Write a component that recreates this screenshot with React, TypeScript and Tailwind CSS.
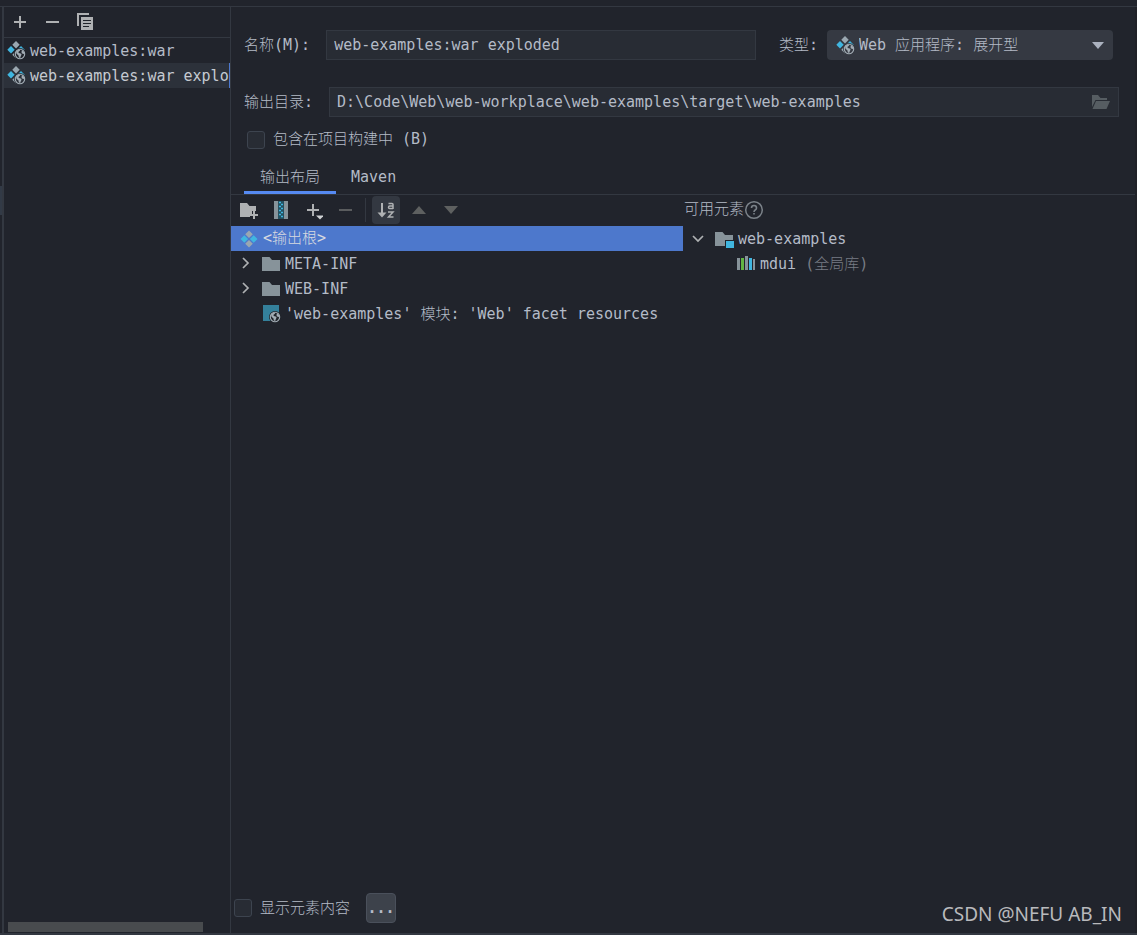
import type { ReactNode } from "react";

/* Icons */

function Globe({ ring = "#21252b" }: { ring?: string }) {
  return (
    <g>
      <circle cx="13" cy="13" r="6" fill={ring} />
      <circle cx="13" cy="13" r="4.7" fill={ring} stroke="#a3adb5" strokeWidth="1.1" />
      <path d="M9 10.5l2-1.8h2.2l-.5 1.4-1.2.7.2 1.2 2 .4.9 1.2-.8 1.6-.6 1.8-1.4-.6-.3-2-2-1.6z" fill="#a3adb5" />
      <path d="M15 9l2 2 .4 2.4-1.2-.6-1.4-.4-.3-1.4z" fill="#a3adb5" />
    </g>
  );
}

function ArtifactIcon({ ring }: { ring?: string }) {
  return (
    <svg width="19" height="19" viewBox="0 0 19 19" className="shrink-0">
      <path d="M9 0l3.7 3.7L9 7.4 5.3 3.7z" fill="#9aa7b0" />
      <path d="M4 5l3.7 3.7L4 12.4.3 8.7z" fill="#40b6e0" />
      <path d="M14 5l3.7 3.7-3.7 3.7-3.7-3.7z" fill="#40b6e0" />
      <path d="M9 10l3.7 3.7L9 17.4l-3.7-3.7z" fill="#9aa7b0" />
      <Globe ring={ring} />
    </svg>
  );
}

function RootIcon() {
  return (
    <svg width="18" height="18" viewBox="0 0 18 18" className="shrink-0">
      <path d="M9 .5l3.8 3.8L9 8.1 5.2 4.3zM9 9.9l3.8 3.8L9 17.5l-3.8-3.8z" fill="#9aa7b0" />
      <path d="M4.3 5.2L8.1 9l-3.8 3.8L.5 9zM13.7 5.2L17.5 9l-3.8 3.8L9.9 9z" fill="#40b6e0" />
    </svg>
  );
}

function FolderIcon({ module = false }: { module?: boolean }) {
  return (
    <svg width="20" height="18" viewBox="0 0 20 18" className="shrink-0">
      <path d="M1 2h7.5l2.5 3h8v11H1z" fill="#87939a" />
      {module && <path d="M11 10h9v8h-9z" fill="#21252b" />}
      {module && <path d="M12 11h8v7h-8z" fill="#40b6e0" />}
    </svg>
  );
}

function FacetIcon() {
  return (
    <svg width="19" height="19" viewBox="0 0 19 19" className="shrink-0">
      <path d="M1 1h16v16H1z" fill="#34809b" />
      <Globe />
    </svg>
  );
}

function LibraryIcon() {
  return (
    <svg width="19" height="18" viewBox="0 0 19 18" className="shrink-0">
      <path d="M0 3h3v12H0zM8 1h3v14H8zM16 4h2v11h-2z" fill="#87939a" />
      <path d="M4 3h3v12H4z" fill="#62b543" />
      <path d="M12 3h3v12h-3z" fill="#40b6e0" />
    </svg>
  );
}

function PlusIcon({ menu = false }: { menu?: boolean }) {
  return (
    <svg width="20" height="20" viewBox="0 0 20 20">
      <path d="M10 4v12M4 10h12" stroke="#afb1b3" strokeWidth="2" />
      {menu && <path d="M13 15.5h8l-4 4z" fill="#d0d2d4" />}
    </svg>
  );
}

function MinusIcon({ color = "#afb1b3" }: { color?: string }) {
  return (
    <svg width="20" height="20" viewBox="0 0 20 20">
      <path d="M4 10h13" stroke={color} strokeWidth="2" />
    </svg>
  );
}

function CopyIcon() {
  return (
    <svg width="18" height="18" viewBox="0 0 18 18">
      <path d="M2 0h12v2H4v11H2z" fill="#afb1b3" />
      <path d="M6 4h12v13H6z" fill="#afb1b3" />
      <path d="M8 7.5h8M8 10.5h8M8 13.5h6" stroke="#21252b" strokeWidth="1" />
    </svg>
  );
}

function NewFolderIcon() {
  return (
    <svg width="20" height="18" viewBox="0 0 20 18">
      <path d="M1 2h7l2.5 3H17v5h-4v3h-2v3H1z" fill="#afb1b3" />
      <path d="M15 10v8M11 14h8" stroke="#afb1b3" strokeWidth="2" />
    </svg>
  );
}

function ArchiveIcon() {
  return (
    <svg width="14" height="18" viewBox="0 0 14 18">
      <path d="M0 0h4v18H0zM10 0h4v18h-4z" fill="#87939a" />
      <path d="M4 0h6v18H4z" fill="#245060" />
      <path d="M5 1.5h2M7 3.5h2M5 5.5h2M7 7.5h2M5 9.5h2M7 11.5h2M5 13.5h2M7 15.5h2" stroke="#40b6e0" strokeWidth="1.3" />
    </svg>
  );
}

function SortIcon() {
  return (
    <svg width="20" height="20" viewBox="0 0 20 20">
      <path d="M6 3v11" stroke="#afb1b3" strokeWidth="2" />
      <path d="M1.5 12.5h9L6 17.5z" fill="#afb1b3" />
      <path d="M12.5 3.5h3.5q1 0 1 1V9M17 6h-3.2q-1.3 0-1.3 1.3T13.8 8.5H17" fill="none" stroke="#afb1b3" strokeWidth="1.5" />
      <path d="M12 12h5l-4.5 5H17.5" fill="none" stroke="#afb1b3" strokeWidth="1.5" />
    </svg>
  );
}

function Triangle({ up = false, color }: { up?: boolean; color: string }) {
  return (
    <svg width="14" height="8" viewBox="0 0 14 8">
      <path d={up ? "M0 8l7-8 7 8z" : "M0 0h14L7 8z"} fill={color} />
    </svg>
  );
}

function ComboArrow() {
  return (
    <svg width="12" height="8" viewBox="0 0 12 8">
      <path d="M0 1h12L6 8z" fill="#abb2bf" />
    </svg>
  );
}

function Chevron({ open = false }: { open?: boolean }) {
  return (
    <svg width="14" height="14" viewBox="0 0 14 14">
      <path d={open ? "M2 4l5 5 5-5" : "M5 1l5 5-5 5"} fill="none" stroke="#afb1b3" strokeWidth="1.7" />
    </svg>
  );
}

function OpenFolderIcon() {
  return (
    <svg width="20" height="16" viewBox="0 0 20 16">
      <path d="M1 1h6l2.5 3H16v2H4.5L1 13z" fill="#565d62" />
      <path d="M5 7h14l-3.5 8H1.5z" fill="#565d62" />
    </svg>
  );
}

/* Building blocks */

function IconButton({ label, disabled, children }: { label: string; disabled?: boolean; children: ReactNode }) {
  return (
    <button type="button" aria-label={label} disabled={disabled} className="flex h-7 w-8 items-center justify-center">
      {children}
    </button>
  );
}

function Check({ id, children }: { id: string; children: ReactNode }) {
  return (
    <div className="flex items-center gap-2">
      <input
        id={id}
        type="checkbox"
        className="h-[18px] w-[18px] shrink-0 appearance-none rounded-[3px] border border-[#3d444f] bg-[#282c34] checked:bg-[#568af2]"
      />
      <label htmlFor={id}>{children}</label>
    </div>
  );
}

const artifacts = ["web-examples:war", "web-examples:war exploded"];

export default function App() {
  return (
    <div className="flex min-h-screen flex-col border-b-2 border-[#333841] bg-[#21242c] pt-1.5 font-['DejaVu_Sans_Mono','Noto_Sans_CJK_SC',monospace] text-[15px] leading-[25px] font-light whitespace-nowrap text-[#b4bbc7]">
      <div className="flex grow border-t border-[#333841]">
        {/* Window edge */}
        <div className="w-1 shrink-0 border-r-2 border-[#333841] pt-[179px]">
          <div className="h-[29px] bg-[#323a46]" />
        </div>

        {/* Artifact list */}
        <aside className="flex w-[227px] shrink-0 flex-col border-r border-[#333841]">
          <div className="flex h-[31px] items-center border-b border-[#333841]">
            <IconButton label="添加"><PlusIcon /></IconButton>
            <IconButton label="移除"><MinusIcon /></IconButton>
            <IconButton label="复制"><CopyIcon /></IconButton>
          </div>
          <ul className="grow">
            {artifacts.map((name, i) => (
              <li
                key={name}
                className={
                  i === 1
                    ? "flex h-[25px] items-center gap-1 overflow-hidden border-r border-[#4d78cc] bg-[#2c313a] pl-[3px] text-[#c5cad1]"
                    : "flex h-[25px] items-center gap-1 overflow-hidden pl-[3px]"
                }
              >
                <ArtifactIcon ring={i === 1 ? "#2c313a" : "#21242c"} />
                <span className="pt-0.5">{name}</span>
              </li>
            ))}
          </ul>
          <div className="mb-px ml-1 h-2.5 w-[195px] bg-[#484b4e]" />
        </aside>

        {/* Artifact settings */}
        <main className="flex min-w-0 grow flex-col border-r-2 border-[#1f2127]">
          <div className="mt-[23px] flex items-center gap-4 pr-[22px] pl-[13px]">
            <label htmlFor="name">名称(M):</label>
            <input
              id="name"
              defaultValue="web-examples:war exploded"
              className="h-[30px] min-w-0 grow border border-[#333841] bg-[#282c34] px-[7px]"
            />
            <div className="ml-[7px] flex items-center gap-[9px]">
              <label htmlFor="type">类型:</label>
              <div className="relative">
                <select id="type" className="block h-[30px] w-[286px] appearance-none rounded bg-[#353942] pl-8">
                  <option>Web 应用程序: 展开型</option>
                </select>
                <span className="pointer-events-none absolute inset-y-0 left-[9px] flex items-center">
                  <ArtifactIcon ring="#353942" />
                </span>
                <span className="pointer-events-none absolute inset-y-0 right-[9px] flex items-center">
                  <ComboArrow />
                </span>
              </div>
            </div>
          </div>

          <div className="mt-[27px] flex items-center gap-4 pr-4 pl-[13px]">
            <label htmlFor="output">输出目录:</label>
            <div className="flex h-[30px] grow items-center border border-[#333841] bg-[#282c34] px-[7px]">
              <input
                id="output"
                defaultValue="D:\Code\Web\web-workplace\web-examples\target\web-examples"
                className="min-w-0 grow bg-transparent"
              />
              <button type="button" aria-label="浏览"><OpenFolderIcon /></button>
            </div>
          </div>

          <div className="mt-2.5 pl-4">
            <Check id="build">包含在项目构建中 (B)</Check>
          </div>

          <div role="tablist" className="mt-2 flex h-[35px] items-stretch border-b border-[#333841] pl-[13px]">
            <button type="button" role="tab" aria-selected="true" className="border-b-3 border-[#568af2] px-4 pt-[3px]">
              输出布局
            </button>
            <button type="button" role="tab" aria-selected="false" className="border-b-3 border-transparent px-[15px] pt-[3px]">
              Maven
            </button>
          </div>

          <div className="flex grow">
            {/* Output layout tree */}
            <section className="w-1/2 shrink-0">
              <div className="flex h-[31px] items-center pb-0.5 pl-0.5">
                <IconButton label="新建目录"><NewFolderIcon /></IconButton>
                <IconButton label="新建归档"><ArchiveIcon /></IconButton>
                <IconButton label="添加副本"><PlusIcon menu /></IconButton>
                <IconButton label="移除元素" disabled><MinusIcon color="#5a5c5e" /></IconButton>
                <span className="mr-1.5 ml-1 h-6 w-px bg-[#333841]" />
                <button type="button" aria-label="按名称排序" className="mr-[3px] flex h-7 w-7 items-center justify-center rounded bg-[#333841]">
                  <SortIcon />
                </button>
                <IconButton label="上移" disabled><Triangle up color="#5e6060" /></IconButton>
                <IconButton label="下移" disabled><Triangle color="#5e6060" /></IconButton>
              </div>
              <ul>
                <li className="flex h-[25px] items-center gap-[5px] bg-[#4d78cc] pl-[9px] text-[#d7dae0]">
                  <RootIcon />
                  <span>&lt;输出根&gt;</span>
                </li>
                {["META-INF", "WEB-INF"].map((dir) => (
                  <li key={dir} className="flex h-[25px] items-center pl-[7px]">
                    <button type="button" aria-label={dir} className="mr-[9px]"><Chevron /></button>
                    <FolderIcon />
                    <span className="ml-1 pt-0.5">{dir}</span>
                  </li>
                ))}
                <li className="flex h-[25px] items-center gap-1 pl-[31px]">
                  <FacetIcon />
                  <span className="pt-0.5">'web-examples' 模块: 'Web' facet resources</span>
                </li>
              </ul>
            </section>

            {/* Available elements */}
            <section className="grow">
              <div className="flex h-[31px] items-center pb-0.5 pl-px">
                <span>可用元素</span>
                <button type="button" aria-label="帮助">
                  <svg width="20" height="20" viewBox="0 0 20 20">
                    <circle cx="10" cy="10" r="8.3" fill="none" stroke="#7b8289" strokeWidth="1.5" />
                    <path d="M7.5 8q0-2.5 2.5-2.5T12.5 8q0 1.2-1.3 2-1.2.8-1.2 2" fill="none" stroke="#7b8289" strokeWidth="1.6" />
                    <path d="M9.2 13h1.6v1.6H9.2z" fill="#7b8289" />
                  </svg>
                </button>
              </div>
              <ul>
                <li className="flex h-[25px] items-center pl-2">
                  <button type="button" aria-label="web-examples" className="mr-[9px]"><Chevron open /></button>
                  <FolderIcon module />
                  <span className="ml-1 pt-0.5">web-examples</span>
                </li>
                <li className="flex h-[25px] items-center gap-1 pl-[54px]">
                  <LibraryIcon />
                  <span className="pt-0.5">mdui <span className="text-[#787c84]">(全局库)</span></span>
                </li>
              </ul>
            </section>
          </div>

          <footer className="flex items-center gap-4 pb-2.5 pl-[3px]">
            <Check id="content">显示元素内容</Check>
            <button type="button" className="h-[30px] w-[30px] rounded border border-[#4a505b] bg-[#3d424b] text-center font-bold">
              ...
            </button>
            <p className="mr-[13px] ml-auto pt-3 font-['Noto_Sans',sans-serif] text-[19px] leading-[18px] font-normal text-[#b9babd]">CSDN @NEFU AB_IN</p>
          </footer>
        </main>
      </div>
    </div>
  );
}
